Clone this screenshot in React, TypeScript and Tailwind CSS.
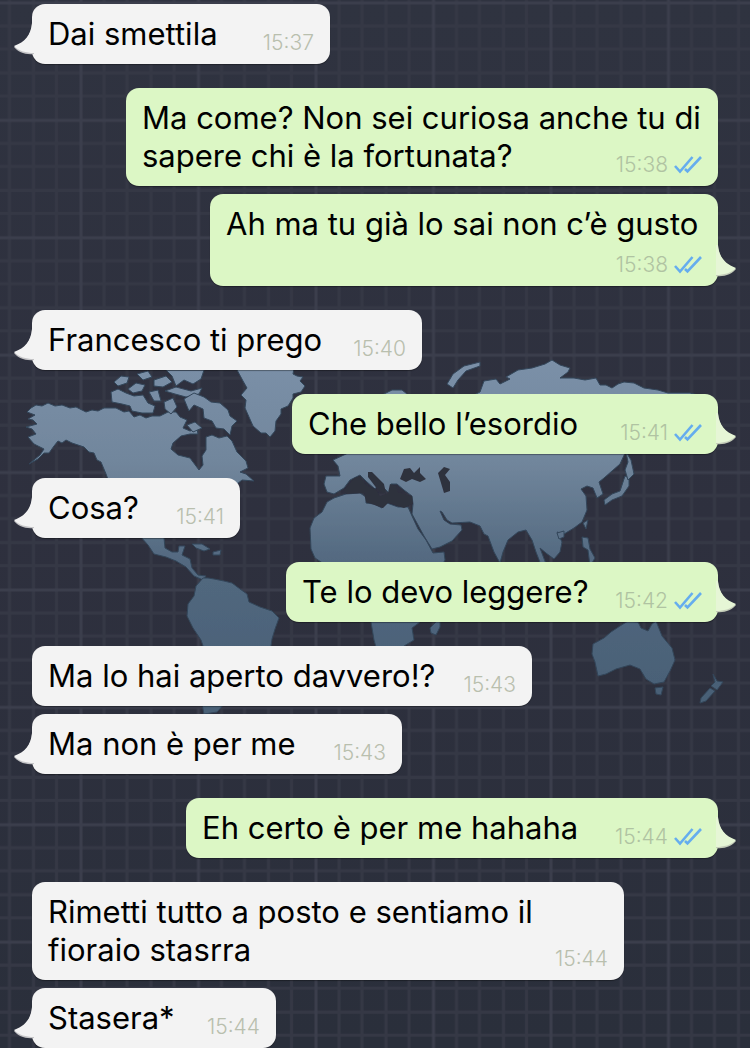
import React from 'react';

interface Message {
  lines: string[];
  time: string;
  sent?: boolean;
  tail?: boolean;
  // follows a bubble of the same sender
  grouped?: boolean;
  width: string;
}

const messages: Message[] = [
  { lines: ['Dai smettila'], time: '15:37', tail: true, grouped: true, width: 'min-w-[298px]' },
  {
    lines: ['Ma come? Non sei curiosa anche tu di', 'sapere chi è la fortunata?'],
    time: '15:38',
    sent: true,
    width: 'min-w-[592px]'
  },
  {
    lines: ['Ah ma tu già lo sai non c’è gusto', ''],
    time: '15:38',
    sent: true,
    tail: true,
    grouped: true,
    width: 'min-w-[508px]'
  },
  { lines: ['Francesco ti prego'], time: '15:40', tail: true, width: 'min-w-[390px]' },
  { lines: ['Che bello l’esordio'], time: '15:41', sent: true, tail: true, width: 'min-w-[426px]' },
  { lines: ['Cosa?'], time: '15:41', tail: true, width: 'min-w-[208px]' },
  { lines: ['Te lo devo leggere?'], time: '15:42', sent: true, tail: true, width: 'min-w-[432px]' },
  { lines: ['Ma lo hai aperto davvero!?'], time: '15:43', width: 'min-w-[500px]' },
  { lines: ['Ma non è per me'], time: '15:43', tail: true, grouped: true, width: 'min-w-[370px]' },
  { lines: ['Eh certo è per me hahaha'], time: '15:44', sent: true, tail: true, width: 'min-w-[532px]' },
  {
    lines: ['Rimetti tutto a posto e sentiamo il', 'fioraio stasrra'],
    time: '15:44',
    width: 'min-w-[592px]'
  },
  { lines: ['Stasera*'], time: '15:44', tail: true, grouped: true, width: 'min-w-[244px]' }
];

const land = [
  // Alaska, Canada and the US down to Central America
  'M27 412 L31 408 L36 405 L42 406 L48 403 L55 406 L62 405 L70 408 L76 407 L86 412 L92 410 L98 411 L104 408 L116 408 L124 412 L129 411 L134 417 L140 415 L146 418 L152 416 L160 416 L168 412 L176 412 L180 417 L187 420 L183 428 L190 431 L197 429 L198 434 L190 434 L181 436 L173 443 L171 449 L178 455 L190 458 L196 466 L199 470 L203 465 L202 456 L206 450 L206 437 L212 435 L219 438 L227 436 L232 441 L237 452 L246 461 L248 468 L240 472 L246 474 L254 481 L242 480 L232 488 L224 496 L216 506 L208 516 L202 524 L205 536 L198 538 L194 532 L184 530 L172 532 L164 538 L165 548 L172 552 L178 552 L179 546 L185 546 L182 555 L190 559 L192 568 L198 575 L206 576 L203 580 L194 576 L186 567 L176 561 L166 557 L154 554 L148 545 L140 536 L132 520 L118 502 L112 490 L106 474 L101 462 L97 460 L94 453 L89 452 L84 447 L72 443 L66 440 L62 443 L58 441 L54 446 L49 453 L44 453 L38 459 L29 464 L40 455 L44 449 L34 444 L28 437 L36 434 L32 429 L26 427 L37 424 L33 420 L28 419 L35 415 Z',
  // Arctic islands
  'M111 392 L118 389 L126 393 L134 396 L143 395 L148 403 L155 406 L153 413 L142 413 L132 411 L130 406 L122 404 L112 402 Z',
  'M114 382 L121 376 L129 377 L127 383 L118 386 Z',
  'M128 389 L136 383 L145 385 L142 391 L133 393 Z',
  'M137 374 L148 371 L152 377 L143 380 Z',
  'M149 392 L158 390 L161 401 L154 401 Z',
  'M154 380 L166 376 L172 382 L163 387 L154 386 Z',
  'M166 370 L204 370 L201 379 L193 384 L184 380 L176 386 L172 376 Z',
  'M165 391 L176 387 L191 391 L202 388 L199 394 L186 397 L175 394 Z',
  'M164 402 L173 398 L177 407 L171 414 L165 409 Z',
  'M184 399 L194 393 L204 397 L211 402 L220 403 L228 410 L230 416 L237 421 L232 426 L230 435 L224 429 L216 428 L212 421 L204 418 L203 409 L194 405 L189 411 Z',
  'M187 425 L195 422 L202 428 L193 432 Z',
  // Greenland
  'M236 368 L294 368 L293 374 L297 376 L303 377 L300 381 L305 386 L301 392 L293 394 L293 398 L288 406 L281 409 L281 414 L276 421 L275 431 L270 437 L266 433 L261 433 L253 426 L249 417 L245 408 L246 400 L241 395 L247 388 L243 381 Z',
  // Caribbean
  'M192 544 L202 544 L210 549 L204 551 L196 548 Z',
  'M213 552 L221 550 L220 555 L213 555 Z',
  // South America
  'M203 578 L208 578 L214 579 L224 581 L232 583 L240 589 L247 594 L249 602 L260 607 L272 611 L279 618 L275 629 L272 639 L270 652 L258 662 L248 674 L238 690 L228 700 L217 712 L204 714 L202 704 L204 684 L208 660 L201 640 L193 628 L187 616 L188 604 L194 596 L196 586 Z',
  // Africa
  'M334 498 L346 494 L360 493 L366 497 L366 503 L374 504 L382 508 L387 503 L398 507 L408 507 L412 516 L418 529 L426 540 L433 553 L444 552 L445 560 L438 572 L426 590 L428 606 L420 622 L412 628 L414 640 L404 646 L397 653 L378 654 L374 640 L371 622 L370 600 L364 584 L352 568 L340 566 L324 564 L315 558 L311 549 L310 528 L314 518 L322 512 L327 502 Z',
  'M430 628 L440 618 L440 627 L436 635 L431 633 Z',
  // Europe and Asia
  'M326 476 L340 476 L338 466 L333 460 L346 454 L372 440 L388 420 L380 396 L392 390 L402 390 L412 398 L430 402 L450 398 L472 396 L480 392 L484 381 L496 379 L500 384 L510 379 L506 377 L518 370 L532 368 L545 364 L552 360 L560 365 L570 368 L568 372 L560 378 L574 378 L585 380 L596 378 L600 385 L606 385 L612 388 L618 384 L624 382 L634 383 L644 388 L658 390 L668 393 L690 393 L702 396 L692 410 L660 424 L650 440 L636 440 L626 451 L620 464 L612 471 L604 478 L599 482 L603 494 L597 498 L593 488 L587 486 L581 489 L586 496 L587 510 L582 522 L574 528 L564 534 L557 532 L562 542 L560 552 L554 559 L546 553 L540 548 L546 564 L552 576 L543 570 L536 552 L532 540 L526 530 L518 532 L508 540 L503 552 L500 563 L494 552 L488 536 L484 534 L480 526 L470 522 L452 523 L447 520 L442 512 L440 511 L444 520 L450 524 L461 525 L462 530 L452 541 L440 547 L432 549 L424 536 L412 514 L413 504 L412 496 L404 490 L397 484 L391 484 L394 490 L390 494 L384 488 L378 482 L370 474 L368 475 L378 485 L375 489 L366 481 L360 475 L350 480 L344 488 L334 494 L327 492 L324 484 Z',
  // Novaya Zemlya
  'M447 384 L453 374 L464 366 L480 362 L480 366 L466 371 L458 380 L453 388 Z',
  // Japan
  'M625 476 L629 478 L629 486 L622 496 L612 500 L605 505 L604 500 L612 494 L620 491 Z',
  'M626 452 L631 460 L634 474 L628 480 L625 470 L628 462 Z',
  // Philippines, Taiwan, Hainan
  'M583 523 L588 520 L586 529 Z',
  'M582 537 L588 538 L590 549 L595 558 L590 566 L588 550 L583 547 Z',
  'M557 533 L564 531 L564 537 L559 539 Z',
  // Australia and New Zealand
  'M593 644 L604 638 L611 632 L620 626 L628 621 L638 622 L641 628 L648 631 L652 624 L656 621 L662 636 L672 648 L675 660 L670 671 L664 682 L654 684 L646 679 L640 669 L630 665 L616 669 L606 674 L598 676 L595 662 L592 654 Z',
  'M655 688 L663 687 L661 695 L656 694 Z',
  'M713 674 L717 681 L723 682 L717 690 L711 686 L715 682 Z',
  'M710 688 L715 691 L706 701 L700 703 L701 698 Z'
];

const seas = [
  // Black Sea, Caspian Sea
  'M400 479 L404 469 L410 468 L414 473 L420 467 L420 473 L426 479 L420 482 L412 479 L406 482 Z',
  'M438 473 L444 467 L450 469 L445 475 L450 482 L450 491 L444 493 L441 483 Z',
  // Adriatic and Aegean
  'M368 472 L372 472 L384 484 L386 494 L378 490 L368 477 Z',
  'M344 490 L354 478 L360 476 L366 485 L376 489 L380 496 L388 493 L390 484 L396 486 L398 492 L412 496 L413 504 L404 508 L388 503 L383 508 L366 502 L364 493 L346 494 Z'
];

function Wallpaper() {
  return (
    <svg
      className="absolute inset-0 h-full w-full"
      viewBox="0 0 750 1048"
      preserveAspectRatio="xMidYMid slice"
      aria-hidden="true"
    >
      <defs>
        <linearGradient id="ground" x1="0" y1="0" x2="0" y2="1">
          <stop offset="0" stopColor="#2f3340" />
          <stop offset="0.5" stopColor="#2e303e" />
          <stop offset="1" stopColor="#2a2f3b" />
        </linearGradient>
        <linearGradient id="land" gradientUnits="userSpaceOnUse" x1="0" y1="360" x2="0" y2="700">
          <stop offset="0" stopColor="#7b90a8" />
          <stop offset="0.3" stopColor="#71869c" />
          <stop offset="0.6" stopColor="#52687f" />
          <stop offset="1" stopColor="#496076" />
        </linearGradient>
        <pattern id="grid" width="117.5" height="117.4" x="79" y="1" patternUnits="userSpaceOnUse">
          <path
            d="M25 0V118M48 0V118M72 0V118M95 0V118M0 25H118M0 48H118M0 72H118M0 95H118"
            stroke="#353845"
            strokeWidth="3"
          />
          <path d="M2 0V118M0 2H118" stroke="#3b3e4c" strokeWidth="3" />
        </pattern>
        <filter id="soft">
          <feGaussianBlur stdDeviation="0.6" />
        </filter>
      </defs>
      <rect width="750" height="1048" fill="url(#ground)" />
      <rect width="750" height="1048" fill="url(#grid)" />
      <g filter="url(#soft)">
        <g fill="url(#land)" stroke="#33465a" strokeWidth="1" strokeLinejoin="round">
          {land.map((d) => (
            <path key={d} d={d} />
          ))}
        </g>
        <g fill="#2e303e">
          {seas.map((d) => (
            <path key={d} d={d} />
          ))}
        </g>
      </g>
    </svg>
  );
}

function Tail({ sent }: { sent?: boolean }) {
  return (
    <svg
      className={`absolute bottom-[9px] h-8 w-5 ${sent ? '-right-[18px] -scale-x-100' : '-left-[18px]'}`}
      viewBox="0 0 20 32"
      aria-hidden="true"
    >
      <path d="M18 1C17 12 11 20 0 24C4 29 11 32 20 31V1Z" fill={sent ? '#c3cbb8' : '#c4c4c6'} />
      <path d="M18 0C17 12 11 19 0 23C5 28 12 30 20 30V0Z" fill={sent ? '#e6f6d6' : '#f3f3f3'} />
    </svg>
  );
}

function DoubleCheck() {
  return (
    <svg
      className="h-[18px] w-7"
      viewBox="0 0 28 18"
      fill="none"
      stroke="#65adee"
      strokeWidth="2.6"
      role="img"
      aria-label="Letto"
    >
      <path d="M1 10L6 15.500L18.500 1" />
      <path d="M11 13L13.500 15.500L27 1" />
    </svg>
  );
}

function Bubble({ message }: { message: Message }) {
  const { lines, time, sent, tail, grouped, width } = message;
  const last = lines[lines.length - 1];

  return (
    <li className={`flex ${sent ? 'justify-end' : 'justify-start'} ${grouped ? 'mt-2' : 'mt-6'}`}>
      <div
        className={`relative rounded-[13px] px-4 py-[11px] shadow-[0_1px_1px_rgba(0,0,0,0.35)] ${width} ${
          sent ? 'bg-[#dcf7c5]' : 'bg-[#f3f3f3]'
        }`}
      >
        {tail && <Tail sent={sent} />}
        {lines.slice(0, -1).map((line) => (
          <p key={line}>{line}</p>
        ))}
        <div className="flex min-h-8 items-end justify-between gap-4">
          <p>{last}</p>
          <div className="flex items-center gap-1.5">
            <time className={`text-[21px] leading-5 font-light ${sent ? 'text-[#b0c3a2]' : 'text-[#b9bfae]'}`}>
              {time}
            </time>
            {sent && <DoubleCheck />}
          </div>
        </div>
      </div>
    </li>
  );
}

export default function App() {
  return (
    <main className="relative min-h-screen overflow-hidden bg-[#2e303e] font-['Inter',sans-serif] text-[31px] leading-[38px] text-black">
      <Wallpaper />
      <ul className="relative -mt-1 px-8">
        {messages.map((message, index) => (
          <Bubble key={index} message={message} />
        ))}
      </ul>
    </main>
  );
}
